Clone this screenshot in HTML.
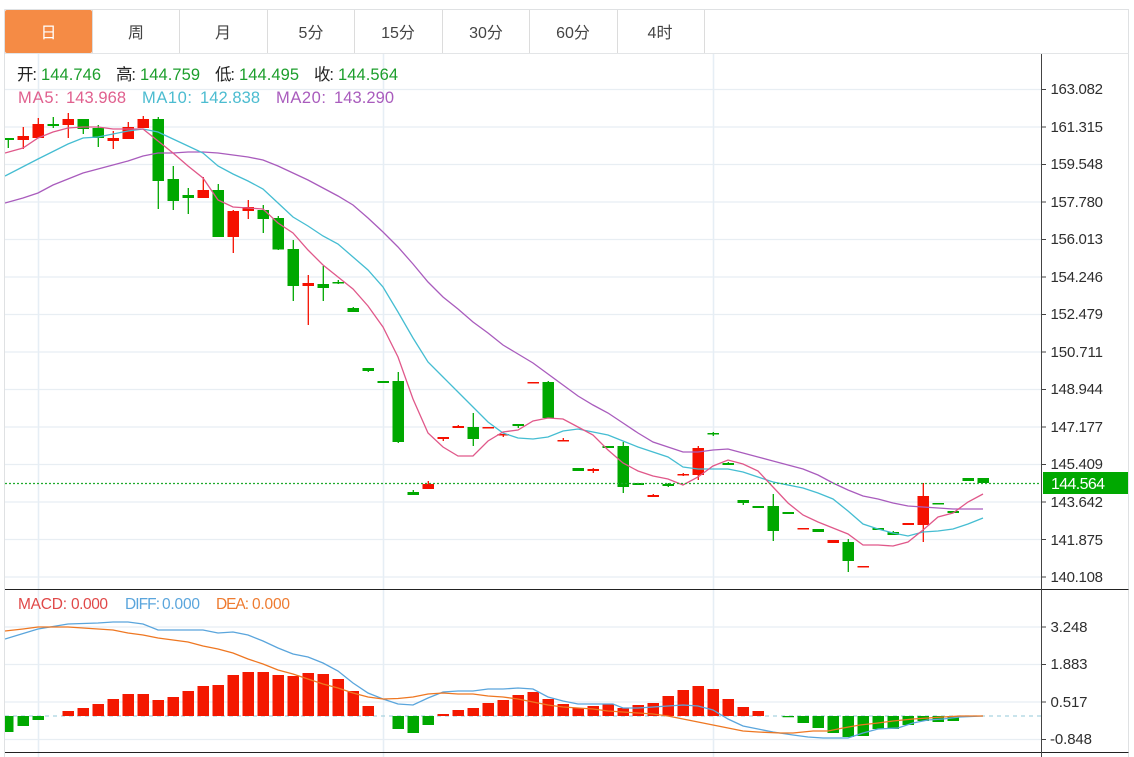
<!DOCTYPE html>
<html lang="zh">
<head>
<meta charset="utf-8">
<title>K线图</title>
<style>
html,body{margin:0;padding:0;background:#fff;width:1134px;height:757px;overflow:hidden}
svg{display:block}
text{font-family:"Liberation Sans","Noto Sans CJK SC",sans-serif}
.ax{font-size:15px;fill:#2e2e2e}
.tab{font-size:16px;fill:#444;text-anchor:middle}
.l{font-size:16.5px}
.s{font-size:15.5px}
</style>
</head>
<body>
<svg width="1134" height="757" viewBox="0 0 1134 757" xmlns="http://www.w3.org/2000/svg">
<defs><clipPath id="m"><rect x="5" y="54" width="1036" height="535"/></clipPath><clipPath id="n"><rect x="5" y="590" width="1036" height="162"/></clipPath></defs>

<!-- frame -->
<path d="M4.5 9.5H1128.5V757M4.5 9.5V757" fill="none" stroke="#dfe1e3" stroke-width="1"/>
<path d="M5 53.5H1128.5" stroke="#e3e5e7" stroke-width="1"/>
<path d="M92.5 10V53M179.5 10V53M267.5 10V53M354.5 10V53M442.5 10V53M529.5 10V53M617.5 10V53M704.5 10V53" stroke="#dcdcdc" stroke-width="1"/>
<rect x="5" y="10" width="87" height="43" rx="2" fill="#f58b45"/>
<text class="tab" x="48.5" y="38" style="fill:#fff">日</text>
<text class="tab" x="136" y="38">周</text>
<text class="tab" x="223" y="38">月</text>
<text class="tab" x="311" y="38">5分</text>
<text class="tab" x="398" y="38">15分</text>
<text class="tab" x="486" y="38">30分</text>
<text class="tab" x="573" y="38">60分</text>
<text class="tab" x="660" y="38">4时</text>

<!-- grid -->
<path d="M5 89.5H1041M5 127H1041M5 164.5H1041M5 202H1041M5 239.5H1041M5 277H1041M5 314.5H1041M5 352H1041M5 389.5H1041M5 427H1041M5 464.5H1041M5 502H1041M5 539.5H1041M5 577H1041M5 627H1041M5 664.5H1041M5 702H1041M5 739.5H1041" stroke="#e8eef3" stroke-width="1.3"/>
<path d="M38.5 54V757M383.5 54V757M713.5 54V757" stroke="#e6eef5" stroke-width="1.6"/>

<g clip-path="url(#m)">
<!-- green wicks -->
<path stroke="#00a800" stroke-width="1.3" fill="none" d="M8.3 138V148M53.3 117V128M83.3 119V134M98.3 125V147M158.3 117V209M173.3 166V210M188.3 188V214M218.3 184V237M263.3 205V233M278.3 216V250M293.3 240V301M323.3 266V301M338.3 280V284M353.3 307V312M368.3 368V372M398.3 372V443M413.3 490V495M473.3 413V446M518.3 424V428M548.3 381V418M623.3 442V493M668.3 483V487M713.3 432V436M728.3 462V465M743.3 500V505M773.3 494V541M848.3 539V572M893.3 531V535"/>
<!-- green bodies -->
<path fill="#00a800" d="M2.5 138h11.5v2h-11.5zM47.5 124h11.5v2h-11.5zM77.5 119h11.5v10h-11.5zM92.5 128h11.5v10h-11.5zM152.5 119h11.5v62h-11.5zM167.5 179h11.5v22h-11.5zM182.5 195h11.5v3h-11.5zM212.5 190h11.5v47h-11.5zM257.5 210h11.5v9h-11.5zM272.5 218h11.5v31.5h-11.5zM287.5 249h11.5v37h-11.5zM317.5 284h11.5v4h-11.5zM332.5 282h11.5v1.5h-11.5zM347.5 308h11.5v4h-11.5zM362.5 368h11.5v3h-11.5zM377.5 381h11.5v2h-11.5zM392.5 381h11.5v61h-11.5zM407.5 492h11.5v3h-11.5zM467.5 427h11.5v12h-11.5zM512.5 424h11.5v2h-11.5zM542.5 382h11.5v36h-11.5zM572.5 468h11.5v3h-11.5zM602.5 446h11.5v2h-11.5zM617.5 446h11.5v41h-11.5zM632.5 483h11.5v2h-11.5zM662.5 484h11.5v2h-11.5zM707.5 433h11.5v1.5h-11.5zM722.5 463h11.5v2h-11.5zM737.5 500h11.5v3h-11.5zM752.5 506h11.5v2h-11.5zM767.5 506h11.5v25h-11.5zM782.5 512h11.5v2h-11.5zM812.5 529h11.5v3h-11.5zM842.5 542h11.5v19h-11.5zM872.5 528h11.5v2h-11.5zM887.5 532h11.5v3h-11.5zM932.5 503h11.5v1.5h-11.5zM947.5 511h11.5v2h-11.5zM962.5 478h11.5v3h-11.5zM977.5 478h11.5v5h-11.5z"/>
<!-- red wicks -->
<path stroke="#f51000" stroke-width="1.3" fill="none" d="M23.3 127V149M38.3 118V138M68.3 113V138M113.3 131V149M128.3 122V139M143.3 116V128M203.3 177V198M233.3 210V253M248.3 200V219M308.3 275V325M428.3 481V489M443.3 437V441M458.3 425V428M503.3 434V437M563.3 438V441.5M593.3 468V473M653.3 494V497M683.3 473V476M698.3 446V480M923.3 483V542"/>
<!-- red bodies -->
<path fill="#f51000" d="M17.5 136h11.5v4h-11.5zM32.5 124h11.5v14h-11.5zM62.5 119h11.5v6h-11.5zM107.5 138h11.5v3h-11.5zM122.5 127h11.5v12h-11.5zM137.5 119h11.5v9h-11.5zM197.5 190h11.5v8h-11.5zM227.5 211h11.5v26h-11.5zM242.5 207h11.5v4h-11.5zM302.5 283h11.5v3h-11.5zM422.5 484h11.5v5h-11.5zM437.5 437h11.5v2h-11.5zM452.5 426h11.5v2h-11.5zM482.5 427h11.5v1.5h-11.5zM497.5 434h11.5v1.5h-11.5zM527.5 382h11.5v1.5h-11.5zM557.5 440h11.5v1.5h-11.5zM587.5 469h11.5v2h-11.5zM647.5 495h11.5v2h-11.5zM677.5 474h11.5v1.5h-11.5zM692.5 448h11.5v27h-11.5zM797.5 528h11.5v1.5h-11.5zM827.5 540h11.5v3h-11.5zM857.5 566h11.5v1.5h-11.5zM902.5 523h11.5v2h-11.5zM917.5 496h11.5v29h-11.5z"/>
<!-- MA lines -->
<polyline fill="none" stroke="#a95cbd" stroke-width="1.3" points="5,203 23,198 38,193 53,185 68,179 83,173 98,169 113,165 128,161 143,156 158,153 173,153 188,152 203,152 218,153 233,155 248,157 263,160 278,166 293,173 308,180 323,188 338,196 353,205 368,218 383,232 398,247 413,264 428,282 443,297 458,309 473,322 488,333 503,345 518,354 533,363 548,374 563,385 578,396 593,405 608,413 623,423 638,433 653,442 668,447 683,452 698,452 713,450 728,449 743,453 758,457 773,461 788,465 803,469 818,475 833,483 848,490 863,496 878,499 893,503 908,506 923,507 938,508 953,509 968,509 983,509"/>
<polyline fill="none" stroke="#45bdd2" stroke-width="1.3" points="5,176 38,159 68,144 83,138 98,137 113,134 128,131 143,129 158,132 173,139 188,146 203,153 218,166 233,174 248,181 263,189 278,203 293,217 308,226 323,236 338,244 353,257 368,270 383,287 398,312 413,338 428,362 443,377 458,392 473,407 488,422 503,433 518,438 533,439 548,437 563,431 578,429 593,432 608,435 623,441 638,447 653,452 668,457 683,467 698,469 713,469 728,469 743,472 758,477 773,482 788,485 803,488 818,493 833,499 848,511 863,524 878,529 893,533 908,536 923,532 938,531 953,529 968,524 983,518"/>
<polyline fill="none" stroke="#e0588a" stroke-width="1.3" points="5,153 23,148 38,138 53,132 68,128 83,127 98,127 113,129 128,129 143,129 158,141 173,153 188,166 203,178 218,200 233,207 248,208 263,209 278,223 293,233 308,250 323,265 338,277 353,289 368,306 383,327 398,357 413,399 428,433 443,447 458,456 473,456 488,441 503,432 518,430 533,421 548,418 563,419 578,427 593,435 608,450 623,463 638,471 653,476 668,479 683,485 698,477 713,466 728,460 743,464 758,471 773,487 788,503 803,515 818,522 833,528 848,534 863,545 878,545 893,546 908,542 923,530 938,517 953,513 968,502 983,494"/>
<!-- current price dotted -->
<path d="M5 483.5H1041" stroke="#1faa2c" stroke-width="1.2" stroke-dasharray="2 2"/>
</g>

<g clip-path="url(#n)">
<path d="M5 716H1041" stroke="#a9d3e0" stroke-width="1.2" stroke-dasharray="4 4"/>
<path fill="#00a800" d="M5 716H13.5V732H5zM17.5 716h11.5v10h-11.5zM32.5 716h11.5v4h-11.5zM392.5 716h11.5v13h-11.5zM407.5 716h11.5v17h-11.5zM422.5 716h11.5v9h-11.5zM782.5 716h11.5v1.3h-11.5zM797.5 716h11.5v7h-11.5zM812.5 716h11.5v12h-11.5zM827.5 716h11.5v17h-11.5zM842.5 716h11.5v21h-11.5zM857.5 716h11.5v20h-11.5zM872.5 716h11.5v13h-11.5zM887.5 716h11.5v13h-11.5zM902.5 716h11.5v9h-11.5zM917.5 716h11.5v5h-11.5zM932.5 716h11.5v6h-11.5zM947.5 716h11.5v5h-11.5z"/>
<path fill="#f41800" d="M62.5 711h11.5v5h-11.5zM77.5 708h11.5v8h-11.5zM92.5 704h11.5v12h-11.5zM107.5 699h11.5v17h-11.5zM122.5 694h11.5v22h-11.5zM137.5 694h11.5v22h-11.5zM152.5 700h11.5v16h-11.5zM167.5 697h11.5v19h-11.5zM182.5 691h11.5v25h-11.5zM197.5 686h11.5v30h-11.5zM212.5 685h11.5v31h-11.5zM227.5 675h11.5v41h-11.5zM242.5 672h11.5v44h-11.5zM257.5 672h11.5v44h-11.5zM272.5 675h11.5v41h-11.5zM287.5 676h11.5v40h-11.5zM302.5 673h11.5v43h-11.5zM317.5 674h11.5v42h-11.5zM332.5 679h11.5v37h-11.5zM347.5 691h11.5v25h-11.5zM362.5 706h11.5v10h-11.5zM437.5 714h11.5v2h-11.5zM452.5 710h11.5v6h-11.5zM467.5 708h11.5v8h-11.5zM482.5 703h11.5v13h-11.5zM497.5 700h11.5v16h-11.5zM512.5 695h11.5v21h-11.5zM527.5 692h11.5v24h-11.5zM542.5 699h11.5v17h-11.5zM557.5 704h11.5v12h-11.5zM572.5 708h11.5v8h-11.5zM587.5 706h11.5v10h-11.5zM602.5 704h11.5v12h-11.5zM617.5 708h11.5v8h-11.5zM632.5 705h11.5v11h-11.5zM647.5 703h11.5v13h-11.5zM662.5 696h11.5v20h-11.5zM677.5 690h11.5v26h-11.5zM692.5 686h11.5v30h-11.5zM707.5 689h11.5v27h-11.5zM722.5 699h11.5v17h-11.5zM737.5 707h11.5v9h-11.5zM752.5 711h11.5v5h-11.5z"/>
<polyline fill="none" stroke="#5aa5dc" stroke-width="1.3" points="5,639 38,629 68,624 98,623 113,622 128,622 143,624 158,630 173,630 188,630 203,630 218,633 233,632 248,635 263,641 278,648 293,654 308,657 323,663 338,671 353,683 368,693 383,699 398,704 413,705 428,698 443,692 458,691 473,691 488,689 503,689 518,688 533,689 548,697 563,701 578,704 593,704 613,704 623,708 638,708 653,707 668,706 683,705 698,706 713,710 728,719 743,726 758,729 773,732 793,735 808,737 823,738 848,738 863,733 878,729 898,728 913,723 928,720 943,719 960,717 983,716"/>
<polyline fill="none" stroke="#ee7722" stroke-width="1.3" points="5,631 23,629 38,627 53,627 68,627 83,628 98,629 113,630 128,633 143,635 158,638 173,640 188,642 203,646 218,649 233,653 248,659 263,664 278,670 293,674 308,679 323,684 338,688 353,693 368,697 383,699 398,698.5 413,697 428,694 443,693 458,694 473,694 488,696 503,697 518,699 533,702 548,705 563,707 578,708 593,709 608,711 623,712 638,713 653,714 668,716 683,719 698,722 713,725 728,728 743,731 758,732 780,733 793,733 813,731 828,731 843,728 860,725 878,723 893,721 913,719 928,718 943,717 960,716 983,716"/>
</g>

<!-- separators & axis -->
<path d="M5 589.5H1128.5M5 752.5H1128.5" stroke="#222" stroke-width="1"/>
<path d="M1041.5 54V757" stroke="#444" stroke-width="1"/>
<path d="M1041 89.5h5M1041 127h5M1041 164.5h5M1041 202h5M1041 239.5h5M1041 277h5M1041 314.5h5M1041 352h5M1041 389.5h5M1041 427h5M1041 464.5h5M1041 502h5M1041 539.5h5M1041 577h5M1041 627h5M1041 664.5h5M1041 702h5M1041 739.5h5" stroke="#444" stroke-width="1"/>

<g class="ax">
<text class="ax" x="1050.5" y="94" textLength="52.5">163.082</text>
<text class="ax" x="1050.5" y="132" textLength="52.5">161.315</text>
<text class="ax" x="1050.5" y="169" textLength="52.5">159.548</text>
<text class="ax" x="1050.5" y="207" textLength="52.5">157.780</text>
<text class="ax" x="1050.5" y="244" textLength="52.5">156.013</text>
<text class="ax" x="1050.5" y="282" textLength="52.5">154.246</text>
<text class="ax" x="1050.5" y="319" textLength="52.5">152.479</text>
<text class="ax" x="1050.5" y="357" textLength="52.5">150.711</text>
<text class="ax" x="1050.5" y="394" textLength="52.5">148.944</text>
<text class="ax" x="1050.5" y="432" textLength="52.5">147.177</text>
<text class="ax" x="1050.5" y="469" textLength="52.5">145.409</text>
<text class="ax" x="1050.5" y="507" textLength="52.5">143.642</text>
<text class="ax" x="1050.5" y="545" textLength="52.5">141.875</text>
<text class="ax" x="1050.5" y="582" textLength="52.5">140.108</text>
<text class="ax" x="1050.5" y="632" textLength="37">3.248</text>
<text class="ax" x="1050.5" y="669" textLength="37">1.883</text>
<text class="ax" x="1050.5" y="707" textLength="37">0.517</text>
<text class="ax" x="1050" y="744" textLength="42">-0.848</text>
</g>
<rect x="1043" y="472" width="85" height="22" fill="#00a800"/>
<text x="1051" y="489" font-size="16" fill="#fff" textLength="54">144.564</text>

<!-- legend -->
<text class="l" x="17" y="80" fill="#222" textLength="20">开:</text>
<text class="l" x="41" y="80" fill="#1c9e2c" textLength="60">144.746</text>
<text class="l" x="116" y="80" fill="#222" textLength="20">高:</text>
<text class="l" x="140" y="80" fill="#1c9e2c" textLength="60">144.759</text>
<text class="l" x="215" y="80" fill="#222" textLength="20">低:</text>
<text class="l" x="239" y="80" fill="#1c9e2c" textLength="60">144.495</text>
<text class="l" x="314" y="80" fill="#222" textLength="20">收:</text>
<text class="l" x="338" y="80" fill="#1c9e2c" textLength="60">144.564</text>

<text class="l" x="18" y="103" fill="#e0608e" textLength="41">MA5:</text>
<text class="l" x="66" y="103" fill="#e0608e" textLength="60">143.968</text>
<text class="l" x="142" y="103" fill="#4cbcd0" textLength="50">MA10:</text>
<text class="l" x="200" y="103" fill="#4cbcd0" textLength="60">142.838</text>
<text class="l" x="276" y="103" fill="#a95cbd" textLength="50">MA20:</text>
<text class="l" x="334" y="103" fill="#a95cbd" textLength="60">143.290</text>

<text class="s" x="18" y="609" fill="#e04848" textLength="49">MACD:</text>
<text class="s" x="71" y="609" fill="#e04848" textLength="37">0.000</text>
<text class="s" x="125" y="609" fill="#5aa5dc" textLength="35">DIFF:</text>
<text class="s" x="162" y="609" fill="#5aa5dc" textLength="38">0.000</text>
<text class="s" x="216" y="609" fill="#ee7b30" textLength="33">DEA:</text>
<text class="s" x="252" y="609" fill="#ee7b30" textLength="38">0.000</text>
</svg>
</body>
</html>
